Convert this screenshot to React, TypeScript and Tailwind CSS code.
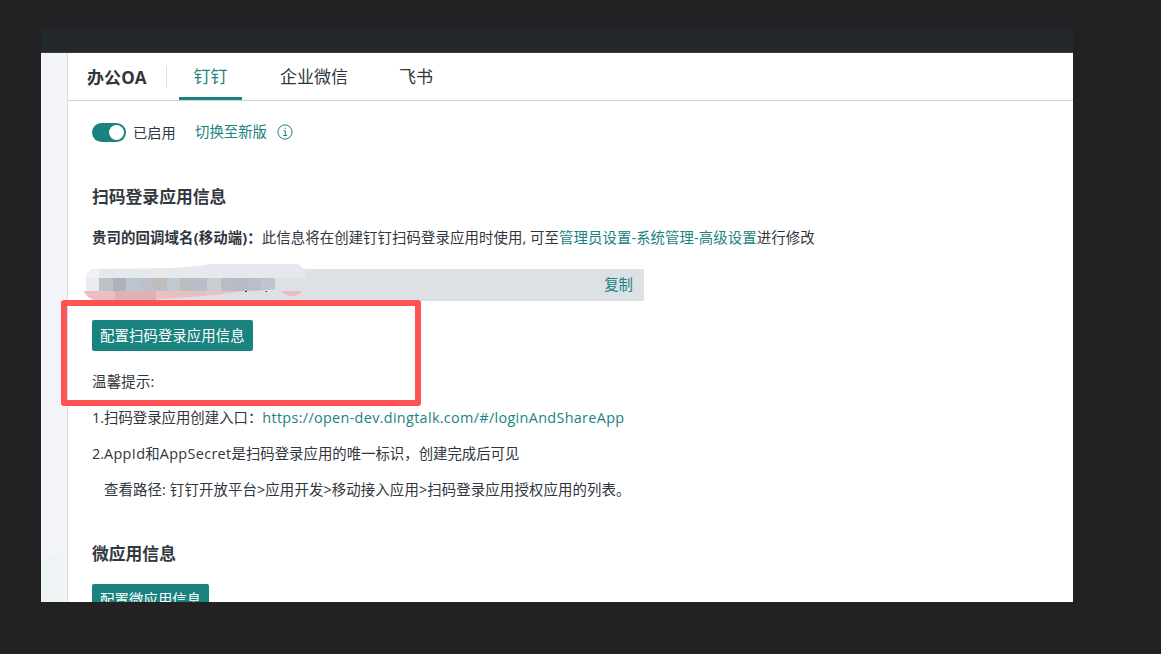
import type { ReactNode } from 'react';

function Section({ children, className }: { children: ReactNode; className: string }) {
  return <h2 className={`h-6 whitespace-nowrap text-[16.8px] font-bold leading-[25px] text-[#33383f] ${className}`}>{children}</h2>;
}

function PrimaryButton({ children }: { children: ReactNode }) {
  return (
    <button className="mt-[19px] flex h-[31px] shrink-0 items-center self-start whitespace-nowrap rounded-[2px] bg-[#1a837f] pl-2 pr-[8px] text-[14.4px] leading-[29px] tracking-[0.08px] text-white">
      <span className="-mt-px">{children}</span>
    </button>
  );
}

const mosaic = [
  'bg-[#c0c1c8]',
  'bg-[#aeb1b8]',
  'bg-[#bcc6d0]',
  'bg-[#bfc0c5]',
  'bg-[#c1bbb9]',
  'bg-[#c1c9d0]',
  'bg-[#bdbdc0]',
  'bg-[#b9bfca]',
  'bg-[#c8cfd3]',
  'bg-[#bbbcc1]',
  'bg-[#b7bbc6]',
  'bg-[#bbbec8]',
  'bg-[#bdc6d0]',
];

function RedactedSmudge() {
  return (
    <div className="absolute -left-2 -top-[6px] h-[38px] w-[225px]">
      <svg className="absolute inset-0" width="225" height="38" viewBox="0 0 225 38">
        <path d="M2 11 L8 6 L90 5 L112 3 L128 1 H215 L217 4 L221 6 L222 15 H190 V27 L155 31 H2 Z" fill="#e5e8ed" />
        <path d="M190 15H222V31H155L190 27Z" fill="#dde0e5" />
        <path d="M2 11 L8 7 H15 V15 H2Z" fill="#f0f2f5" />
        <path d="M2 15H15V28H2Z" fill="#e8ecef" />
        <path d="M155 27H190V32H139Z" fill="#dde0e5" />
        <path d="M-1 28 H160 L139 31 L119 33 L92 35 L64 37 H10 L4 34Z" fill="#e9bfc4" />
        <path d="M31 28H72V37H31Z" fill="#dcb1b8" />
        <path d="M197 28H218Q215 33 207 33Q200 32 197 28Z" fill="#e8bdc2" />
        <path d="M161 28.5h2M181.5 28.5h1.5" stroke="#343a43" />
      </svg>
      <div className="absolute left-[15px] top-[15px] flex h-[13px] w-[176px] [clip-path:polygon(0_0,100%_0,100%_88%,85%_100%,0_100%)]">
        {mosaic.map((color, i) => (
          <span key={i} className={`h-full flex-1 ${color}`} />
        ))}
      </div>
    </div>
  );
}

export default function App() {
  return (
    <div className="h-[654px] w-[1161px] overflow-hidden bg-[#222224] pl-[41px] pt-[29px] font-['Open_Sans','Noto_Sans_CJK_SC',sans-serif] text-[14.4px] text-[#30363d]">
      <div className="relative flex h-[573px] w-[1032px] flex-col overflow-hidden bg-white">
        <div className="h-6 shrink-0 border-b border-[#3a3b3c] bg-[#23282b]" />
        <div className="flex min-h-0 flex-1">
          <aside className="flex w-[27px] shrink-0 flex-col justify-end border-r border-[#dcdee3] bg-[#f3f4f9]">
            <div className="h-[46px] w-[21px] bg-[#eef4f4]" />
          </aside>
          <main className="flex min-w-0 flex-1 flex-col">
            <header className="flex h-12 shrink-0 items-center border-b border-[#cbd2da] pl-[19px] text-[17px] leading-6">
              <h1 className="w-[79px] whitespace-nowrap pt-[2px] text-[17px] font-bold tracking-[0.1px]">办公OA</h1>
              <div className="mr-3 h-[22px] w-px bg-[#dcdfe3]" />
              <nav className="flex h-full">
                <a className="flex w-[63px] items-center justify-center border-b-[3px] border-[#1a837f] pt-1 text-[#1a837f]">钉钉</a>
                <a className="ml-[38px] flex w-[68px] items-center justify-center whitespace-nowrap pt-px">企业微信</a>
                <a className="ml-[51px] flex w-[34px] items-center justify-center whitespace-nowrap pt-px">飞书</a>
              </nav>
            </header>

            <div className="flex flex-1 flex-col overflow-hidden pl-6">
              <div className="mt-[21px] flex h-[21px] shrink-0 items-center">
                <span className="flex h-[19px] w-[34px] items-center justify-end rounded-full bg-[#1a837f] pr-[2px]">
                  <span className="size-[15px] rounded-full bg-white" />
                </span>
                <span className="ml-[7px] w-[62px] text-[14.2px]">已启用</span>
                <a className="-mt-px w-[82px] whitespace-nowrap text-[14.4px] text-[#1a837f]">切换至新版</a>
                <svg className="-mt-px" width="16" height="16" viewBox="0 0 16 16" fill="none" stroke="#1a837f">
                  <circle cx="8" cy="8" r="7.1" />
                  <path d="M6.5 6.7H8.3V11.5M6.2 11.5H10.2M7.4 4.2H8.8" />
                </svg>
              </div>

              <Section className="mt-[41px] shrink-0">扫码登录应用信息</Section>
              <p className="mt-[18px] h-6 shrink-0 whitespace-nowrap leading-6 tracking-[0.09px]">
                <b className="tracking-[0.13px]">贵司的回调域名(移动端)：</b>此信息将在创建钉钉扫码登录应用时使用, 可至
                <a className="text-[#1a837f]">管理员设置-系统管理-高级设置</a>进行修改
              </p>

              <div className="relative mt-[19px] flex h-8 w-[552px] shrink-0 items-center justify-end rounded-[2px] bg-[#dde0e5] pr-[11px]">
                <RedactedSmudge />
                <a className="text-[#1a837f]">复制</a>
              </div>

              <PrimaryButton>配置扫码登录应用信息</PrimaryButton>
              <div className="mt-[13px] shrink-0 whitespace-nowrap leading-9">
                <p className="tracking-[0.25px]">温馨提示:</p>
                <p>
                  1.扫码登录应用创建入口：<a className="tracking-[0.325px] text-[#1a837f]">https://open-dev.dingtalk.com/#/loginAndShareApp</a>
                </p>
                <p>
                  2.<span className="tracking-[0.35px]">AppId</span>和<span className="tracking-[0.35px]">AppSecret</span>是扫码登录应用的唯一标识，创建完成后可见
                </p>
                <p className="pl-3 tracking-[0.13px]">查看路径: 钉钉开放平台&gt;应用开发&gt;移动接入应用&gt;扫码登录应用授权应用的列表。</p>
              </div>

              <Section className="mt-[33px] shrink-0">微应用信息</Section>
              <PrimaryButton>配置微应用信息</PrimaryButton>
            </div>
          </main>
        </div>
        <div className="absolute left-[20px] top-[271px] h-[106px] w-[360px] rounded-[3px] border-[6px] border-[#ff5252]" />
      </div>
    </div>
  );
}
